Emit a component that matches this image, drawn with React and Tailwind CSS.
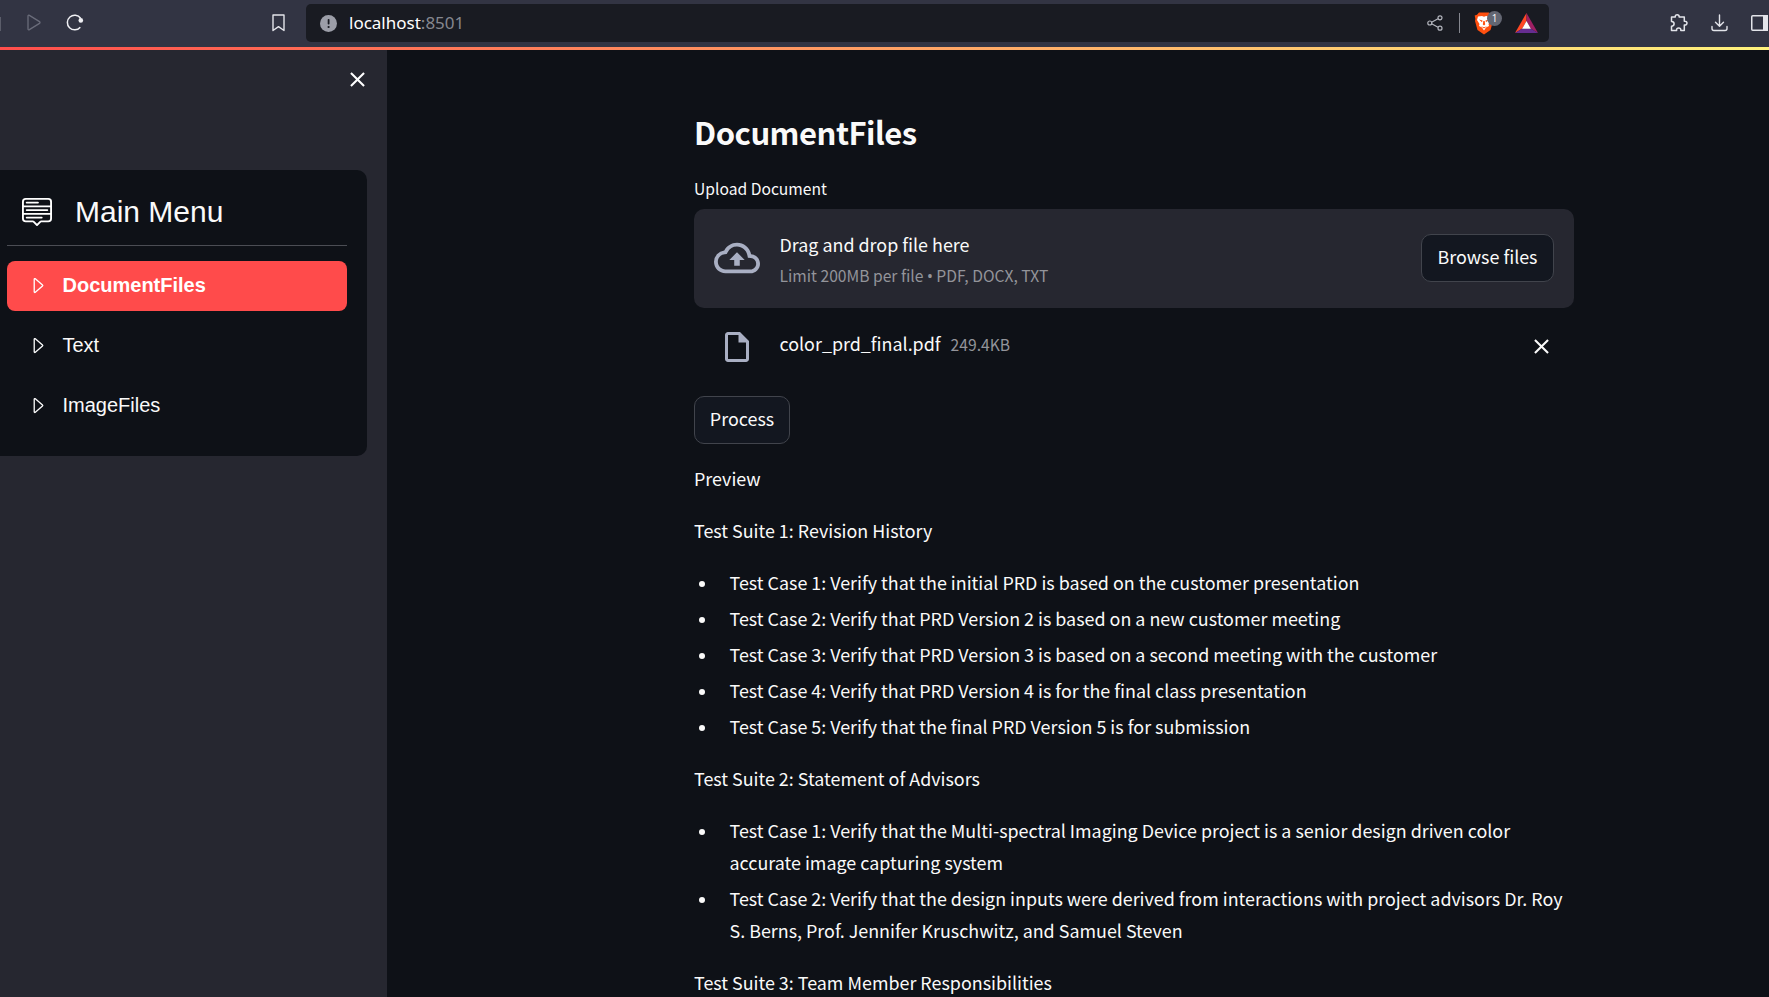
import { BsCaretRight, BsMenuUp } from 'react-icons/bs';
import { MdOutlineCloudUpload, MdOutlineInsertDriveFile, MdClose } from 'react-icons/md';

const sans = "font-['Noto_Sans_CJK_SC','Open_Sans',sans-serif]";

function Toolbar() {
  return (
    <header className="relative flex h-[47px] shrink-0 items-center overflow-hidden bg-[#323443]">
      <span className="h-[14px] w-px bg-[#5b5d6a]" />
      <svg className="mb-[2px] ml-[26px] h-[17px] w-[14px]" viewBox="0 0 14 17" fill="none" stroke="#6a6c7a" strokeWidth="1.3" strokeLinejoin="round">
        <path d="M1 2.2 Q1 .6 2.4 1.4 L12.5 7.6 Q13.5 8.5 12.5 9.4 L2.4 15.6 Q1 16.4 1 14.8 Z" />
      </svg>
      <svg className="mb-[2px] ml-[25px] h-[17px] w-[18px]" viewBox="0 0 18 17" fill="none" stroke="#f0f0f4" strokeWidth="1.5">
        <path d="M14.3 13.2 A7.3 7.3 0 1 1 14.6 4.3" />
        <circle cx="14.8" cy="6.4" r="2.3" fill="#f0f0f4" stroke="none" />
      </svg>
      <svg className="mb-[1px] ml-[188px] h-[18px] w-[13px]" viewBox="0 0 13 18" fill="none" stroke="#e3e4ea" strokeWidth="1.4" strokeLinejoin="round">
        <path d="M1 1 H12 V16.5 L6.5 12.6 L1 16.5 Z" />
      </svg>
      <div className="mb-[1px] ml-[21px] flex h-[38px] w-[1243px] items-center rounded-[5px] bg-[#191b22] pl-[14px]">
        <svg className="h-[17px] w-[17px]" viewBox="0 0 17 17">
          <circle cx="8.5" cy="8.5" r="8.5" fill="#9c9ea8" />
          <rect x="7.7" y="4" width="1.8" height="5.6" rx=".8" fill="#191b22" />
          <circle cx="8.6" cy="12" r="1.1" fill="#191b22" />
        </svg>
        <span className="ml-[12px] font-['Noto_Sans',sans-serif] text-[17px] leading-[22px] text-white">
          localhost<span className="text-[#85878f]">:8501</span>
        </span>
        <svg className="ml-auto h-[16px] w-[16px]" viewBox="0 0 16 16" fill="none" stroke="#b3b5bd" strokeWidth="1.2">
          <path d="M4.6 7.2 L11 3.8 M4.6 8.8 L11 12.2" />
          <circle cx="2.8" cy="8" r="2" />
          <circle cx="13" cy="2.8" r="2" />
          <circle cx="13" cy="13.2" r="2" />
        </svg>
        <span className="ml-[16px] h-5 w-px bg-[#85878f]" />
        <div className="relative ml-[14px] h-[23px] w-[28px]">
          <svg className="h-[23px] w-[20px]" viewBox="0 0 20 23">
            <path d="M5 .5 H15 L17 2.8 L19.3 3.6 L18.6 7 L19 9 L16.5 18 L10 22.5 L3.5 18 L1 9 L1.4 7 L.7 3.6 L3 2.8 Z" fill="#ff4f0f" />
            <path d="M4 4.5 L8 4 L10 4.8 L12 4 L16 4.5 L17 8 L14.5 12 L15 14 L12 15.5 L10 18.5 L8 15.5 L5 14 L5.5 12 L3 8 Z" fill="#fff" />
            <path d="M5 7.5 L8.5 8.6 L8 10.2 Z M15 7.5 L11.5 8.6 L12 10.2 Z M9.3 9 H10.7 L11.2 12.5 L10 13.6 L8.8 12.5 Z M7 14.2 L10 15.3 L13 14.2 L10 16.5 Z" fill="#ff4f0f" />
          </svg>
          <span className="absolute -top-[1px] left-[13px] flex h-[15px] w-[15px] items-center justify-center rounded-full bg-[#636672] font-['Open_Sans',sans-serif] text-[10px] leading-none text-white">1</span>
        </div>
        <svg className="mr-[11px] ml-[13px] h-[20px] w-[23px]" viewBox="0 0 23 20">
          <path d="M11.5 0 L0 20 L7.3 15.6 L11.5 8 Z" fill="#ff4724" />
          <path d="M11.5 0 L23 20 L15.7 15.6 L11.5 8 Z" fill="#9e1f63" />
          <path d="M0 20 H23 L15.7 15.6 H7.3 Z" fill="#662d91" />
          <path d="M11.5 8 L15.9 15.7 H7.1 Z" fill="#fff" />
        </svg>
      </div>
      <svg className="mb-[1px] ml-[121px] h-[18px] w-[18px]" viewBox="0 0 18 18" fill="none" stroke="#e3e4ea" strokeWidth="1.5" strokeLinejoin="round">
        <path d="M1.5 3 H5.3 C5 1.5 6 .8 7.2 .8 S9.4 1.6 9.1 3 H14.3 V7.2 C16 6.9 17 7.9 17 9.1 S16 11.3 14.3 11 V16.5 H10.8 C11 14.8 10 13.9 8.7 13.9 S6.4 14.8 6.6 16.5 H1.5 V12.2 C3.2 12.2 4.1 11.2 4.1 9.8 S3.2 7.4 1.5 7.4 Z" />
      </svg>
      <svg className="mb-[1px] ml-[23px] h-[18px] w-[17px] shrink-0" viewBox="0 0 17 18" fill="none" stroke="#e3e4ea" strokeWidth="1.4" strokeLinecap="round" strokeLinejoin="round">
        <path d="M8.5 1 V12 M4.5 8.3 L8.5 12.2 L12.5 8.3 M1 12.5 V14.5 Q1 16.5 3 16.5 H14 Q16 16.5 16 14.5 V12.5" />
      </svg>
      <svg className="mb-[2px] ml-[23px] h-[16px] w-[17px] shrink-0" viewBox="0 0 17 16">
        <rect x=".75" y=".75" width="15.5" height="14.5" rx="1" fill="none" stroke="#e3e4ea" strokeWidth="1.5" />
        <rect x="12" y="0" width="5" height="16" fill="#e3e4ea" />
      </svg>
    </header>
  );
}

function MenuItem({ label, active }) {
  return (
    <li className={`flex h-[50px] items-center rounded-[8px] pl-[20px] text-[20px] ${active ? 'bg-[#ff4b4b] font-bold text-white' : 'text-[#fafafa]'}`}>
      <BsCaretRight className="mb-[2px] h-[21px] w-[21px]" />
      <span className="mb-[2px] ml-[14.5px]">{label}</span>
    </li>
  );
}

function Sidebar() {
  return (
    <aside className="flex w-[387px] shrink-0 flex-col bg-[#262730]">
      <div className="flex h-[60px] justify-end pt-[17px] pr-[17px]">
        <MdClose className="h-[25px] w-[25px] text-white" />
      </div>
      <nav className="mt-[60px] mr-[20px] h-[286px] rounded-r-[10px] bg-[#0e1117] pr-[20px] pl-[7px] font-['Liberation_Sans',sans-serif]">
        <div className="flex h-[76px] items-center border-b border-[#4b4d54] pt-[7px] pl-[15px]">
          <BsMenuUp className="h-[30px] w-[30px] text-white" />
          <span className="ml-[23px] text-[30px] text-[#fafafa]">Main Menu</span>
        </div>
        <ul className="mt-[15px] flex flex-col gap-[10px]">
          <MenuItem label="DocumentFiles" active />
          <MenuItem label="Text" />
          <MenuItem label="ImageFiles" />
        </ul>
      </nav>
    </aside>
  );
}

function Button({ children, className }) {
  return (
    <button className={`h-[48px] shrink-0 rounded-[10px] border border-[#41444c] bg-[#131720] pb-[5px] text-[17.9px] leading-[30px] whitespace-nowrap text-[#fafafa] ${className}`}>
      {children}
    </button>
  );
}

function Uploader() {
  return (
    <section>
      <p className="mt-[20px] h-[32px] text-[15.65px] leading-[24px]">Upload Document</p>
      <div className="flex h-[99px] items-center rounded-[10px] bg-[#262730] px-[20px] pb-[1px]">
        <MdOutlineCloudUpload className="h-[46px] w-[46px] text-[#a9afc3]" />
        <div className="mt-[3px] ml-[19.5px] flex flex-col">
          <span className="text-[17.9px] leading-[32px]">Drag and drop file here</span>
          <span className="text-[15.65px] leading-[32px] text-[#93949a]">
            Limit 200MB per file <span className="font-['Noto_Sans',sans-serif] leading-none">•</span> PDF, DOCX, TXT
          </span>
        </div>
        <Button className="ml-auto w-[133px]">Browse files</Button>
      </div>
      <div className="flex h-[76px] items-center pr-[20px] pl-[25px]">
        <MdOutlineInsertDriveFile className="mt-[2px] h-[36px] w-[36px] text-[#a9afc3]" />
        <span className="mb-[6px] ml-[24.5px] text-[17.9px] leading-[32px]">color_prd_final.pdf</span>
        <span className="mb-[3px] ml-[10px] text-[15.65px] leading-[30px] text-[#93949a]">249.4KB</span>
        <MdClose className="ml-auto h-[25px] w-[25px]" />
      </div>
    </section>
  );
}

const suites = [
  {
    title: 'Test Suite 1: Revision History',
    cases: [
      'Test Case 1: Verify that the initial PRD is based on the customer presentation',
      'Test Case 2: Verify that PRD Version 2 is based on a new customer meeting',
      'Test Case 3: Verify that PRD Version 3 is based on a second meeting with the customer',
      'Test Case 4: Verify that PRD Version 4 is for the final class presentation',
      'Test Case 5: Verify that the final PRD Version 5 is for submission',
    ],
  },
  {
    title: 'Test Suite 2: Statement of Advisors',
    cases: [
      'Test Case 1: Verify that the Multi-spectral Imaging Device project is a senior design driven color accurate image capturing system',
      'Test Case 2: Verify that the design inputs were derived from interactions with project advisors Dr. Roy S. Berns, Prof. Jennifer Kruschwitz, and Samuel Steven',
    ],
  },
  { title: 'Test Suite 3: Team Member Responsibilities', cases: [] },
];

function Preview() {
  return (
    <article className="mt-[18px] flex flex-col gap-[20px] text-[17.9px] leading-[32px]">
      <p>Preview</p>
      {suites.map((suite) => (
        <div key={suite.title} className="flex flex-col gap-[20px]">
          <p>{suite.title}</p>
          {suite.cases.length > 0 && (
            <ul className="flex flex-col gap-[4px]">
              {suite.cases.map((text) => (
                <li key={text} className="flex">
                  <span className="mt-[15px] mr-[24.5px] ml-[5px] h-[6px] w-[6px] shrink-0 rounded-full bg-[#fafafa]" />
                  <span>{text}</span>
                </li>
              ))}
            </ul>
          )}
        </div>
      ))}
    </article>
  );
}

export default function App() {
  return (
    <div className="flex h-[997px] w-[1769px] flex-col overflow-hidden bg-[#0e1117]">
      <Toolbar />
      <div className="h-[3px] shrink-0 bg-[linear-gradient(90deg,#ff4b4b_-33px,#fffd80_1881px)]" />
      <div className="flex min-h-0 flex-1">
        <Sidebar />
        <main className={`ml-[307px] w-[880px] pt-[57px] text-[#fafafa] ${sans}`}>
          <h1 className="text-[31px] leading-[50px] font-bold tracking-[-0.5px]">DocumentFiles</h1>
          <Uploader />
          <Button className="mt-[12px] w-[96px]">Process</Button>
          <Preview />
        </main>
      </div>
    </div>
  );
}
